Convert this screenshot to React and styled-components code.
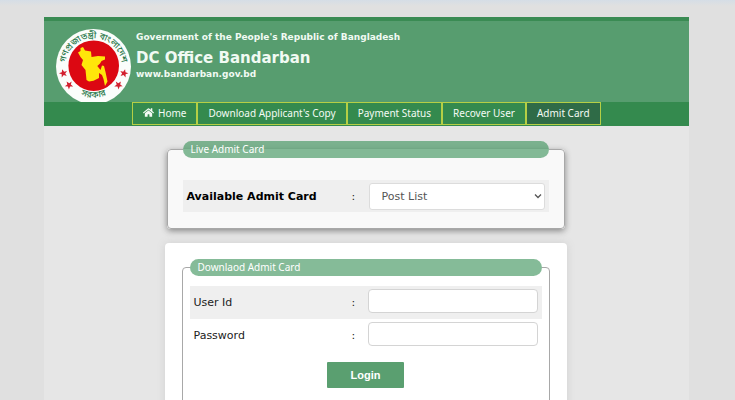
import React from 'react';
import styled, { createGlobalStyle, css } from 'styled-components';
import { FaHome } from 'react-icons/fa';

const GlobalStyle = createGlobalStyle`
  * {
    box-sizing: border-box;
  }

  body {
    margin: 0;
    background: #e0e0e0;
    font-family: 'DejaVu Sans', Verdana, sans-serif;
    font-size: 11px;
    color: #222;
  }
`;

const Page = styled.div`
  padding: 17px 46px 0 44px;
  background: linear-gradient(#d5dde6, #e0e0e0 6px);
  height: 100vh;
  overflow: hidden;
`;

const Wrapper = styled.div`
  background: #e6e6e6;
  min-height: 100%;
`;

const Header = styled.header`
  display: flex;
  height: 85px;
  padding: 8px 12px 0;
  gap: 5px;
  border-top: 4px solid #3a8b53;
  background: #579d6f;
  overflow: hidden;
`;

const Titles = styled.div`
  padding-top: 1px;
  color: #f1faf3;
  font-weight: bold;
`;

const SmallTitle = styled.p`
  margin: 0;
  font-size: 9px;
  line-height: 14px;
`;

const OfficeTitle = styled.h1`
  margin: 0;
  padding-top: 5px;
  font-size: 15px;
  line-height: 18px;
`;

const Nav = styled.nav`
  display: flex;
  height: 24px;
  padding-left: 88px;
  background: #348a4e;
`;

const NavLink = styled.a`
  display: flex;
  align-items: center;
  gap: 4px;
  height: 23px;
  padding: 0 10px 2px;
  border: 1px solid #b5cf45;
  background: ${props => (props.$active ? '#2f6b47' : 'transparent')};
  color: #f4fbf5;
  font-family: 'Noto Sans', sans-serif;
  font-size: 10px;
  text-decoration: none;
  white-space: nowrap;
`;

const Main = styled.main`
  display: flex;
  flex-direction: column;
  gap: 14px;
  max-width: 404px;
  margin: 0 auto;
  padding: 15px 2px 0 0;
`;

const panelBorder = css`
  min-width: 0;
  border: 1px solid #a8a8a8;
  border-radius: 4px;
`;

const LivePanel = styled.fieldset`
  ${panelBorder}
  margin: 0 2px;
  padding: 22px 15px 16px;
  background: #f9f9f9;
  box-shadow: 0 2px 6px #888;
`;

const LoginCard = styled.form`
  padding: 16px 17px;
  border-radius: 4px;
  background: #fff;
  box-shadow: 0 0 8px #d0d0d0;
`;

const LoginPanel = styled.fieldset`
  ${panelBorder}
  margin: 0;
  padding: 10px 7px 40px;
`;

const Legend = styled.legend`
  width: 100%;
  height: 17px;
  padding: 0 8px;
  border-radius: 9px;
  background: rgba(52, 142, 84, 0.6);
  color: #fff;
  font-family: 'Noto Sans', sans-serif;
  font-size: 10px;
  line-height: 17px;
`;

const Row = styled.div`
  display: grid;
  grid-template-columns: 1fr 17px 176px;
  align-items: center;
  height: 32px;
  padding: 0 4px;
  background: ${props => (props.$shaded ? '#efefef' : 'transparent')};
`;

const LoginRow = styled(Row)`
  grid-template-columns: 1fr 16px 170px;
  height: 33px;
`;

const Label = styled.label`
  color: ${props => (props.$strong ? '#000' : '#222')};
  font-size: 11px;
  font-weight: ${props => (props.$strong ? 'bold' : 'normal')};
`;

const PostSelect = styled.select`
  appearance: none;
  width: 100%;
  height: 27px;
  padding: 0 12px;
  border: 1px solid #dcdcdc;
  border-radius: 3px;
  background: #fff;
  color: #555;
  font-family: 'DejaVu Sans', Verdana, sans-serif;
  font-size: 11px;
`;

const SelectWrap = styled.div`
  position: relative;
`;

const Chevron = styled.svg`
  position: absolute;
  right: 3px;
  top: 9px;
  pointer-events: none;
`;

const TextBox = styled.input`
  width: 100%;
  height: 24px;
  margin-bottom: 3px;
  padding: 0 8px;
  border: 1px solid #d4d4d4;
  border-radius: 4px;
  background: #fff;
  font-size: 11px;
`;

const LoginButton = styled.button`
  display: block;
  width: 77px;
  height: 26px;
  margin: 10px auto 0;
  border: 0;
  border-radius: 1px;
  background: #5a9f70;
  color: #fff;
  font-family: 'Liberation Sans', Arial, sans-serif;
  font-size: 11px;
  font-weight: bold;
`;

const Seal = styled.svg`
  flex: none;
`;

const Star = ({ x, y, r }) => (
  <path
    transform={`translate(${x} ${y}) rotate(${r})`}
    fill="#d3202f"
    d="M0-4.200 1.200-1.300 4.200-1.300 1.800.6 2.600 3.600 0 1.800-2.600 3.600-1.800.6-4.200-1.300-1.200-1.300Z"
  />
);

const Emblem = () => (
  <Seal width="75" height="75" viewBox="0 0 75 75" role="img" aria-label="Government seal">
    <defs>
      <path id="seal-top" d="M9.300 42A28.500 28.500 0 1 1 65.700 42" />
      <path id="seal-bottom" d="M12 56A32 32 0 0 0 63 56" />
    </defs>
    <circle cx="37.500" cy="37.500" r="37.500" fill="#fbfdfb" />
    <circle cx="37.700" cy="36.700" r="25.300" fill="#dc0812" />
    <path
      fill="#ffe60a"
      d="M22 23.500 24.500 22 24.500 19 27 18 29 21.500 35 22.500 35.500 28 42 27 49 27.500 49 30.500 45.500 32 44 34.500 41.300 37 44.500 41 46 36.500 48 37 49.500 43 51.500 52.500 49 57 47.500 50 46 46 43 44 43 49 37.500 51.700 33 52.500 30.500 51 29.500 41 25.500 36 27 31 24.500 28Z"
    />
    <g fill="#2d7a4d" fontFamily="'Noto Sans Bengali', 'Noto Sans', sans-serif" fontWeight="500" fontSize="9">
      <text>
        <textPath href="#seal-top" startOffset="50%" textAnchor="middle">গণপ্রজাতন্ত্রী বাংলাদেশ</textPath>
      </text>
      <text>
        <textPath href="#seal-bottom" startOffset="50%" textAnchor="middle">সরকার</textPath>
      </text>
    </g>
    <Star x={7.300} y={44.300} r={-15} />
    <Star x={13} y={56} r={-35} />
    <Star x={68} y={44.300} r={15} />
    <Star x={62.500} y={56} r={35} />
  </Seal>
);

const links = ["Download Applicant's Copy", 'Payment Status', 'Recover User', 'Admit Card'];

const App = () => (
  <>
    <GlobalStyle />
    <Page>
      <Wrapper>
        <Header>
          <Emblem />
          <Titles>
            <SmallTitle>Government of the People's Republic of Bangladesh</SmallTitle>
            <OfficeTitle>DC Office Bandarban</OfficeTitle>
            <SmallTitle>www.bandarban.gov.bd</SmallTitle>
          </Titles>
        </Header>
        <Nav>
          <NavLink href="#home">
            <FaHome size={11} />
            Home
          </NavLink>
          {links.map(link => (
            <NavLink key={link} href="#page" $active={link === 'Admit Card'}>
              {link}
            </NavLink>
          ))}
        </Nav>
        <Main>
          <LivePanel>
            <Legend>Live Admit Card</Legend>
            <Row $shaded>
              <Label htmlFor="post" $strong>Available Admit Card</Label>
              <span>:</span>
              <SelectWrap>
                <PostSelect id="post">
                  <option>Post List</option>
                </PostSelect>
                <Chevron width="8" height="8" viewBox="0 0 8 8" fill="none" stroke="#555" strokeWidth="1.300">
                  <path d="M1 2.500 4 5.500 7 2.500" />
                </Chevron>
              </SelectWrap>
            </Row>
          </LivePanel>
          <LoginCard>
            <LoginPanel>
              <Legend>Downlaod Admit Card</Legend>
              <LoginRow $shaded>
                <Label htmlFor="user">User Id</Label>
                <span>:</span>
                <TextBox id="user" type="text" />
              </LoginRow>
              <LoginRow>
                <Label htmlFor="password">Password</Label>
                <span>:</span>
                <TextBox id="password" type="password" />
              </LoginRow>
              <LoginButton type="button">Login</LoginButton>
            </LoginPanel>
          </LoginCard>
        </Main>
      </Wrapper>
    </Page>
  </>
);

export default App;
